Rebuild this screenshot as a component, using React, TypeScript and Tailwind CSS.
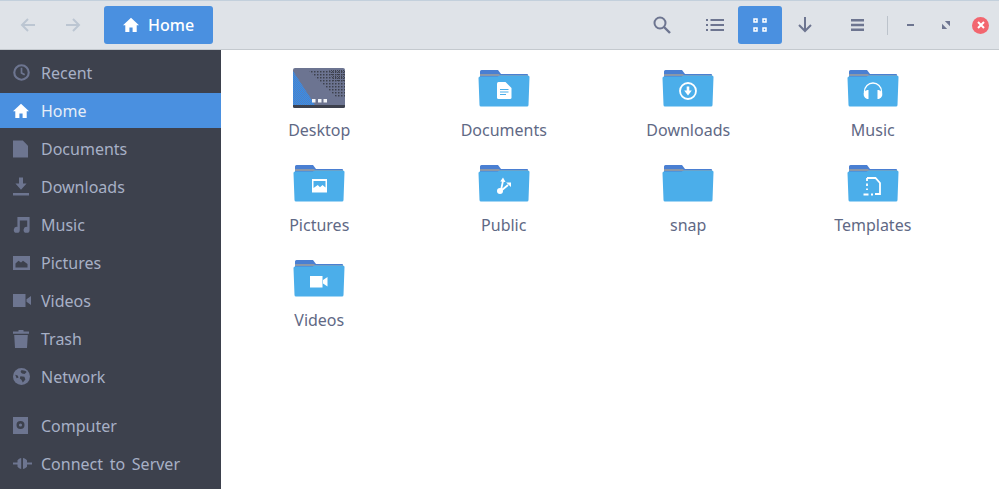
import React from "react";

const FONT = "font-['Noto_Sans','Open_Sans',sans-serif]";

const HomeGlyph = ({ className }: { className?: string }) => (
  <svg viewBox="0 0 16 16" className={className} fill="currentColor">
    <path d="M8 .8 0 8.200h2.300V15h4.100v-4.400h3.200V15h4.100V8.200H16z" />
  </svg>
);

const Icons: Record<string, React.ReactNode> = {
  Recent: (
    <svg viewBox="0 0 16 16" className="w-[17px] h-[17px]" fill="none" stroke="currentColor">
      <circle cx="8" cy="8" r="6.800" strokeWidth="2" />
      <path d="M8 3.600V8.400l3 1.800" strokeWidth="1.600" />
    </svg>
  ),
  Home: <HomeGlyph className="w-[16px] h-[16px] text-white" />,
  Documents: (
    <svg viewBox="0 0 16 18" className="w-[15px] h-[18px]" fill="currentColor">
      <path d="M0 0h10.500L16 5.500V18H0z" />
    </svg>
  ),
  Downloads: (
    <svg viewBox="0 0 16 18" className="w-[16px] h-[19px]" fill="currentColor">
      <path d="M6 0h4v6h3.600L8 12.200 2.400 6H6zM0 15.600h16V18H0z" />
    </svg>
  ),
  Music: (
    <svg viewBox="0 0 17 17" className="w-[17px] h-[17px]" fill="currentColor">
      <path d="M4.400 1h12.200v12.800a3 3 0 1 1-2.400-2.900V4.400H6.800v9.400a3 3 0 1 1-2.400-2.900z" />
    </svg>
  ),
  Pictures: (
    <svg viewBox="0 0 17 14" className="w-[17px] h-[14px]">
      <path fill="currentColor" d="M0 0h17v14H0z" />
      <path fill="#3d414d" d="M2.500 11.500V7.500l3-2.800 2.500 1.800 2-1.800 4.500 3.400v3.400z" />
    </svg>
  ),
  Videos: (
    <svg viewBox="0 0 18 13" className="w-[18px] h-[13px]" fill="currentColor">
      <path d="M0 0h12.500v13H0zM13.500 5.200 18 2v9l-4.500-3.200z" />
    </svg>
  ),
  Trash: (
    <svg viewBox="0 0 16 18" className="w-[16px] h-[18px]" fill="currentColor">
      <path d="M5.500 0h5v1.400H16v2.400H0V1.400h5.500zM1.200 5h13.600L14 18H2z" />
    </svg>
  ),
  Network: (
    <svg viewBox="0 0 17 17" className="w-[17px] h-[17px]">
      <circle cx="8.500" cy="8.500" r="8.500" fill="currentColor" />
      <path fill="#3d414d" d="M8 2.400c2.400-.6 4.600.2 5.600 1.600l-2 2-2.600-.4-1.400-1.600zM7.400 8.200l4 .6 1 2.600-2.600 3-1.400-2.600-1.600-1.400zM2.200 6.800l2.400.6 1 2-2 .8z" />
    </svg>
  ),
  Computer: (
    <svg viewBox="0 0 15 17" className="w-[15px] h-[17px]">
      <path fill="currentColor" fillRule="evenodd" d="M0 0h15v17H0zM7.500 4a4 4 0 1 0 0 8 4 4 0 0 0 0-8z" />
      <circle cx="7.500" cy="8" r="1.600" fill="currentColor" />
    </svg>
  ),
  "Connect to Server": (
    <svg viewBox="0 0 19 11" className="w-[19px] h-[11px]" fill="currentColor">
      <path d="M0 4.500h4.500V2.200C5.400 1 7 .3 8.200 0v11c-1.200-.3-2.800-1-3.700-2.200V6.500H0zM10 0c1.300.3 3 1 4 2.200v2.300h5v2h-5v2.300c-1 1.200-2.700 1.900-4 2.200z" />
    </svg>
  ),
};

const places = ["Recent", "Home", "Documents", "Downloads", "Music", "Pictures", "Videos", "Trash", "Network"];
const devices = ["Computer", "Connect to Server"];

const SideRow = ({ name }: { name: string }) => {
  const active = name === "Home";
  return (
    <div className="h-[38px] pt-[2px] pb-[1px]">
      <div className={`h-[35px] flex items-center text-[16px] [word-spacing:2.500px] ${active ? "bg-[#4a90e0] text-[#e6edf7]" : "text-[#a7b0c6]"}`}>
        <span className="w-[41px] pl-[13px] flex items-center text-[#6d7590]">{Icons[name]}</span>
        <span>{name}</span>
      </div>
    </div>
  );
};

const Folder = ({ children }: { children?: React.ReactNode }) => (
  <svg viewBox="0 0 52 38" className="w-[52px] h-[38px]">
    <path fill="#4a7fd2" d="M2 6V2.500Q2 1 3.500 1h16.500l3 4h26.500Q50 5 50 7v4H2z" />
    <path fill="#8b97a8" d="M2 5h19l1 1h28v1H2z" />
    <path fill="#4baeea" d="M.5 9Q.5 7.500 2 7.500h17.500L22 6.500h28Q51.500 6.500 51.500 8L50.500 36Q50.500 37.500 49 37.500H3Q1.500 37.500 1.500 36z" />
    {children}
  </svg>
);

const DesktopIcon = () => (
  <svg viewBox="0 0 52 40" className="w-[52px] h-[40px]">
    <defs>
      <pattern id="dk" width="3" height="3" patternUnits="userSpaceOnUse">
        <rect width="1.500" height="1.500" fill="#3d414d" />
      </pattern>
      <pattern id="dk2" width="2" height="2" patternUnits="userSpaceOnUse">
        <rect width="1" height="1" fill="#3d414d" />
      </pattern>
      <pattern id="bl" width="2" height="2" patternUnits="userSpaceOnUse">
        <rect width="1" height="1" fill="#2f8ff0" />
        <rect x="1" y="1" width="1" height="1" fill="#2f8ff0" />
      </pattern>
    </defs>
    <rect width="52" height="40" rx="2" fill="#6c7491" />
    <path fill="url(#dk)" d="M16 3h36v27H44z" />
    <path fill="url(#dk2)" d="M36 1h16v12H40z" />
    <path fill="#4a88dc" opacity=".55" d="M0 3 22 37H0z" />
    <path fill="url(#bl)" d="M0 3 22 37H0z" />
    <path fill="#3d414d" d="M0 37h52v1.500Q52 40 50 40H2Q0 40 0 38.500z" />
    <path fill="#f2f4f8" d="M19 31h3.500v3.500H19zM25 31h3.500v3.500H25zM30.500 31H34v3.500h-3.500z" />
  </svg>
);

const items: { name: string; glyph?: React.ReactNode }[] = [
  { name: "Desktop" },
  {
    name: "Documents",
    glyph: (
      <>
        <path fill="#fff" d="M20.500 13h7l6 6v9.500q0 1.500-1.500 1.500H20.500q-1.500 0-1.500-1.500v-14q0-1.500 1.500-1.500z" />
        <path stroke="#4baeea" strokeWidth="1" d="M22 20.500h8.500M22 23h8.500M22 25.500h6" />
      </>
    ),
  },
  {
    name: "Downloads",
    glyph: (
      <>
        <circle cx="26" cy="22" r="8" fill="none" stroke="#fff" strokeWidth="1.800" />
        <path fill="#fff" d="M24.700 17.500h2.600v4h2.500L26 26.500l-3.800-5h2.500z" />
      </>
    ),
  },
  {
    name: "Music",
    glyph: (
      <>
        <path fill="none" stroke="#fff" strokeWidth="1.300" d="M17.500 25v-2.500a8.500 8.500 0 0 1 17 0V25" />
        <path fill="#fff" d="M21.500 21v9c-2.600 0-4.800-1.800-4.800-4.500s2.200-4.500 4.800-4.500zM30.500 21v9c2.600 0 4.800-1.800 4.800-4.500s-2.200-4.500-4.800-4.500z" />
      </>
    ),
  },
  {
    name: "Pictures",
    glyph: (
      <>
        <path fill="#fff" d="M19 15h15v13.500H19z" />
        <path fill="#4baeea" d="M20.500 17h12v6.500l-3-2.500-2.500 2.300-2.200-2.300-4.300 3z" />
      </>
    ),
  },
  {
    name: "Public",
    glyph: (
      <>
        <circle cx="22" cy="27" r="3" fill="#fff" />
        <path fill="none" stroke="#fff" strokeWidth="1.800" d="M23 26 25 17M24 26l6-5" />
        <path fill="#fff" d="M22.300 17.500 25 13.500l2.500 4.500zM28 18.500h5v4.500z" />
      </>
    ),
  },
  { name: "snap" },
  {
    name: "Templates",
    glyph: (
      <>
        <path fill="none" stroke="#fff" strokeWidth="1.800" d="M20 14h8.500l4.500 5v11h-5" />
        <path fill="none" stroke="#fff" strokeWidth="1.800" d="M20 14v3M20 19.500v2.500M20 24.500v1.500M16.500 30.500h5M24 30.500h2" />
      </>
    ),
  },
  {
    name: "Videos",
    glyph: <path fill="#fff" d="M17 17h12.500v11.500H17zM30 21l4.500-3v9.500L30 24.500z" />,
  },
];

const ToolBtn = ({ children, className = "" }: { children: React.ReactNode; className?: string }) => (
  <div className={`flex items-center justify-center text-[#6d7590] ${className}`}>{children}</div>
);

export default function App() {
  return (
    <div className={`w-[999px] h-[489px] flex flex-col overflow-hidden bg-white ${FONT}`}>
      <header className="h-[50px] shrink-0 flex items-center bg-[#dfe3e8] border-t border-t-[#c3d0dc] border-b border-b-[#c4c9ce]">
        <ToolBtn className="w-[16px] ml-[20px] text-[#bcc6d2]">
          <svg viewBox="0 0 16 14" className="w-[16px] h-[14px]" fill="none" stroke="currentColor" strokeWidth="2">
            <path d="M15 7H2M8 1 2 7l6 6" />
          </svg>
        </ToolBtn>
        <ToolBtn className="w-[16px] ml-[29px] text-[#bcc6d2]">
          <svg viewBox="0 0 16 14" className="w-[16px] h-[14px]" fill="none" stroke="currentColor" strokeWidth="2">
            <path d="M1 7h13M8 1l6 6-6 6" />
          </svg>
        </ToolBtn>
        <div className="ml-[23px] w-[109px] h-[38px] rounded-[3px] bg-[#4a90e0] text-white flex items-center pl-[19px] gap-[9px] text-[16px] font-medium">
          <HomeGlyph className="w-[16px] h-[16px]" />
          <span>Home</span>
        </div>
        <ToolBtn className="w-[18px] ml-[440px]">
          <svg viewBox="0 0 18 18" className="w-[18px] h-[18px]" fill="none" stroke="currentColor" strokeWidth="2">
            <circle cx="7" cy="7" r="5.500" />
            <path d="m11 11 6 6" strokeWidth="2.400" />
          </svg>
        </ToolBtn>
        <ToolBtn className="w-[18px] ml-[35px]">
          <svg viewBox="0 0 18 14" className="w-[18px] h-[14px]" fill="currentColor">
            <path d="M0 1h2v2H0zM4.500 1H18v2H4.500zM0 6h2v2H0zM4.500 6H18v2H4.500zM0 11h2v2H0zM4.500 11H18v2H4.500z" />
          </svg>
        </ToolBtn>
        <div className="ml-[14px] w-[44px] h-[38px] rounded-[3px] bg-[#4a90e0] flex items-center justify-center">
          <svg viewBox="0 0 14 14" className="w-[14px] h-[14px]" fill="none" stroke="#fff" strokeWidth="1.500">
            <path d="M1 1h3v3H1zM10 1h3v3h-3zM1 10h3v3H1zM10 10h3v3h-3z" />
          </svg>
        </div>
        <ToolBtn className="w-[14px] ml-[16px]">
          <svg viewBox="0 0 14 16" className="w-[14px] h-[16px]" fill="none" stroke="currentColor" strokeWidth="2">
            <path d="M7 0v14M1 8l6 6 6-6" />
          </svg>
        </ToolBtn>
        <ToolBtn className="w-[13px] ml-[39px]">
          <svg viewBox="0 0 13 12" className="w-[13px] h-[12px]" fill="currentColor">
            <path d="M0 0h13v2.400H0zM0 4.800h13v2.400H0zM0 9.600h13V12H0z" />
          </svg>
        </ToolBtn>
        <div className="ml-[23px] w-px h-[19px] bg-[#bcc3cb]" />
        <ToolBtn className="w-[7px] ml-[19px]">
          <span className="block w-[7px] h-[2px] bg-[#6d7590]" />
        </ToolBtn>
        <ToolBtn className="w-[8px] ml-[28px]">
          <svg viewBox="0 0 7 7" className="w-[8px] h-[8px]" fill="currentColor">
            <path d="M2.500 0H7v4.500zM0 2.500 4.500 7H0z" />
          </svg>
        </ToolBtn>
        <div className="ml-[22px] w-[17px] h-[17px] rounded-full bg-[#f2666f] flex items-center justify-center">
          <svg viewBox="0 0 8 8" className="w-[8px] h-[8px]" fill="none" stroke="#fff" strokeWidth="2">
            <path d="m1 1 6 6M7 1 1 7" />
          </svg>
        </div>
      </header>
      <div className="flex-1 flex min-h-0">
        <aside className="w-[221px] shrink-0 bg-[#3d414d] pt-[3px]">
          {places.map((p) => (
            <SideRow key={p} name={p} />
          ))}
          <div className="h-[11px]" />
          {devices.map((p) => (
            <SideRow key={p} name={p} />
          ))}
        </aside>
        <main className="flex-1 pl-[6px] pt-[18px]">
          <div className="grid grid-cols-[repeat(4,184.500px)] auto-rows-[95px]">
            {items.map((it) => (
              <div key={it.name} className="flex flex-col items-center">
                <div className="h-[40px] flex items-center">
                  {it.name === "Desktop" ? <DesktopIcon /> : <Folder>{it.glyph}</Folder>}
                </div>
                <span className="mt-[11px] text-[16px] leading-[22px] text-[#5f6985]">{it.name}</span>
              </div>
            ))}
          </div>
        </main>
      </div>
    </div>
  );
}
